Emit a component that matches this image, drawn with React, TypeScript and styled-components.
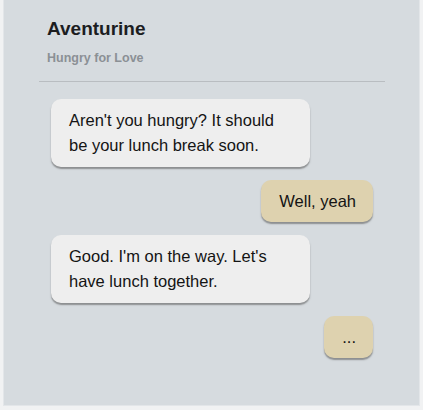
import React from "react";
import styled, { createGlobalStyle } from "styled-components";

const Global = createGlobalStyle`
  html, body { margin: 0; padding: 0; background: #f1f2f3; }
  body { font-family: "Liberation Sans", Arial, sans-serif; }
`;

const Frame = styled.div`
  box-sizing: border-box;
  margin: 0 3px;
  width: 417px;
  height: 406px;
  background: #d6dbdf;
  border: 1px solid #e3e6e9;
  border-top: none;
  display: flex;
  flex-direction: column;
`;

const Header = styled.div`
  padding: 17px 0 0 43px;
  display: flex;
  flex-direction: column;
`;

const Title = styled.h1`
  margin: 0;
  font-size: 19px;
  line-height: 24px;
  font-weight: 700;
  color: #1c1d1f;
`;

const Subtitle = styled.div`
  margin-top: 9px;
  font-size: 12.5px;
  line-height: 16px;
  font-weight: 700;
  color: #8b9095;
`;

const Divider = styled.hr`
  margin: 15px 34px 0 35px;
  border: none;
  border-top: 1px solid #b9bdc1;
  height: 0;
`;

const Messages = styled.div`
  display: flex;
  flex-direction: column;
  gap: 13px;
  padding: 17px 46px 0 47px;
`;

const Bubble = styled.div<{ $mine?: boolean }>`
  box-sizing: border-box;
  align-self: ${(p) => (p.$mine ? "flex-end" : "flex-start")};
  max-width: 259px;
  padding: 9px 17px 8.5px 18px;
  border-radius: 10px;
  background: ${(p) => (p.$mine ? "#ded2af" : "#eeeeee")};
  box-shadow: 0 2px 1.5px rgba(80, 80, 80, 0.55);
  color: #141414;
  font-size: 16.5px;
  line-height: 25px;
`;

export default function App() {
  return (
    <>
      <Global />
      <Frame>
        <Header>
          <Title>Aventurine</Title>
          <Subtitle>Hungry for Love</Subtitle>
        </Header>
        <Divider />
        <Messages>
          <Bubble>Aren't you hungry? It should be your lunch break soon.</Bubble>
          <Bubble $mine>Well, yeah</Bubble>
          <Bubble>Good. I'm on the way. Let's have lunch together.</Bubble>
          <Bubble $mine>...</Bubble>
        </Messages>
      </Frame>
    </>
  );
}
